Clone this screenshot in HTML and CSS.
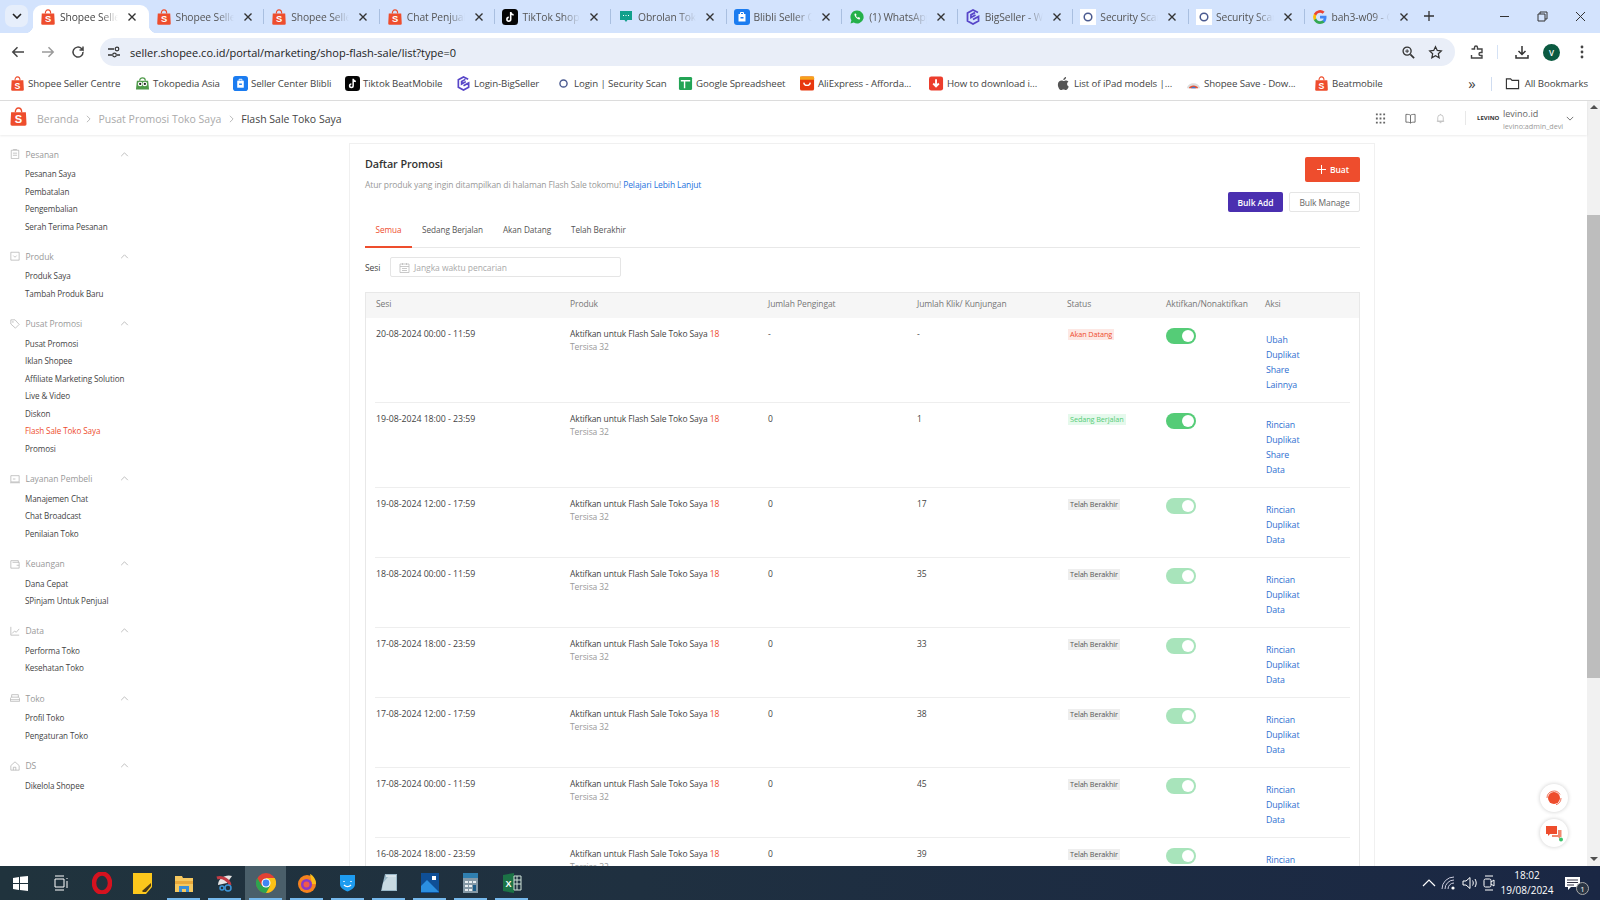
FILE: index.html
```html
<!DOCTYPE html>
<html lang="id">
<head>
<meta charset="utf-8">
<title>Flash Sale Toko Saya</title>
<link rel="stylesheet" href="styles.css">
</head>
<body>
<svg class="defs" width="0" height="0">
  <symbol id="shopee" viewBox="0 0 16 18"><path d="M1 5h14l.6 11.2a1.500 1.500 0 0 1-1.500 1.600H1.900a1.500 1.500 0 0 1-1.500-1.600z" fill="#ee4d2d"/><path d="M5 5c0-2.400 1.200-4 3-4s3 1.600 3 4" fill="none" stroke="#ee4d2d" stroke-width="1.300"/><text x="8" y="15" font-size="10.500" font-family="Liberation Sans" font-weight="700" fill="#fff" text-anchor="middle">S</text></symbol>
  <symbol id="tiktok" viewBox="0 0 16 16"><rect width="16" height="16" rx="3.500" fill="#050505"/><path d="M8.700 3v7.300a1.900 1.900 0 1 1-1.900-1.900M8.700 3.200c.3 1.600 1.300 2.500 2.900 2.700" fill="none" stroke="#fff" stroke-width="1.600"/></symbol>
  <symbol id="blibli" viewBox="0 0 16 16"><rect width="16" height="16" rx="3" fill="#1b7cf0"/><path d="M4.500 5h7v7.500h-7z" fill="#fff"/><path d="M6.500 5V3.500h3V5M6.500 8h3" fill="none" stroke="#fff" stroke-width="1"/><path d="M6.500 8h3v1.500h-3z" fill="#1b7cf0"/></symbol>
  <symbol id="big" viewBox="0 0 16 16"><path d="M13 3.500 8 1 2.500 4v8L8 15l5.500-3V7.500L8 10.500M10.500 6 6 8.500V5.800L10 3.600" fill="none" stroke="#5846c8" stroke-width="1.800"/></symbol>
  <symbol id="ring" viewBox="0 0 16 16"><circle cx="8" cy="8" r="3.800" fill="none" stroke="#4a5a90" stroke-width="1.500"/></symbol>
  <symbol id="chev" viewBox="0 0 10 6"><path d="M1 5l4-4 4 4" fill="none" stroke="#aaa" stroke-width=".9"/></symbol>
  <symbol id="x" viewBox="0 0 10 10"><path d="M1.500 1.500l7 7M8.500 1.500l-7 7" stroke="#333" stroke-width="1.400"/></symbol>
</svg>

<header class="browser">
  <div class="tabstrip">
    <div class="tabsearch"><svg width="10" height="6" viewBox="0 0 10 6"><path d="M1 1l4 4 4-4" fill="none" stroke="#222" stroke-width="1.600"/></svg></div>
    <div class="tabs">
      <div class="tab active"><svg class="fav"><use href="#shopee"/></svg><span class="tablabel">Shopee Seller Centre</span><svg class="tabx"><use href="#x"/></svg></div>
      <div class="tab"><svg class="fav"><use href="#shopee"/></svg><span class="tablabel">Shopee Seller Centre</span><svg class="tabx"><use href="#x"/></svg></div>
      <div class="tab sep"><svg class="fav"><use href="#shopee"/></svg><span class="tablabel">Shopee Seller Centre</span><svg class="tabx"><use href="#x"/></svg></div>
      <div class="tab sep"><svg class="fav"><use href="#shopee"/></svg><span class="tablabel">Chat Penjual Shopee</span><svg class="tabx"><use href="#x"/></svg></div>
      <div class="tab sep"><svg class="fav"><use href="#tiktok"/></svg><span class="tablabel">TikTok Shop</span><svg class="tabx"><use href="#x"/></svg></div>
      <div class="tab sep"><svg class="fav" viewBox="0 0 16 16"><path d="M2 2h12v9H9.500L8 13l-1.500-2H2z" fill="#12a08c"/><path d="M5 6.500h1M7.500 6.500h1M10 6.500h1" stroke="#fff"/></svg><span class="tablabel">Obrolan Toko Anda</span><svg class="tabx"><use href="#x"/></svg></div>
      <div class="tab sep"><svg class="fav"><use href="#blibli"/></svg><span class="tablabel">Blibli Seller Center</span><svg class="tabx"><use href="#x"/></svg></div>
      <div class="tab sep"><svg class="fav" viewBox="0 0 16 16"><path d="M8 1.500a6.500 6.500 0 0 0-5.600 9.800L1.500 14.500l3.300-.9A6.500 6.500 0 1 0 8 1.500z" fill="#25b04a"/><path d="M5.600 4.800c-1 1.700 2.800 6.200 5 5.600l.6-1.400-1.600-.9-.7.700c-.9-.4-1.600-1.200-2-2l.7-.7-.8-1.600z" fill="#fff"/></svg><span class="tablabel">(1) WhatsApp Web</span><svg class="tabx"><use href="#x"/></svg></div>
      <div class="tab sep"><svg class="fav"><use href="#big"/></svg><span class="tablabel">BigSeller - Web</span><svg class="tabx"><use href="#x"/></svg></div>
      <div class="tab sep"><svg class="fav white"><use href="#ring"/></svg><span class="tablabel">Security Scan</span><svg class="tabx"><use href="#x"/></svg></div>
      <div class="tab sep"><svg class="fav white"><use href="#ring"/></svg><span class="tablabel">Security Scan</span><svg class="tabx"><use href="#x"/></svg></div>
      <div class="tab sep"><svg class="fav" viewBox="0 0 16 16"><path d="M14.500 8.200c0-.5 0-1-.1-1.400H8v2.800h3.700a3.200 3.200 0 0 1-1.400 2v1.800h2.200c1.300-1.200 2-3 2-5.200z" fill="#4285f4"/><path d="M8 15c1.900 0 3.400-.6 4.500-1.700l-2.200-1.700c-.6.400-1.400.7-2.300.7-1.800 0-3.300-1.200-3.800-2.800H1.900V11.300A7 7 0 0 0 8 15z" fill="#34a853"/><path d="M4.200 9.500a4 4 0 0 1 0-2.900V4.800H1.900a7 7 0 0 0 0 6.500z" fill="#fbbc05"/><path d="M8 3.800c1 0 1.900.3 2.600 1l2-2A7 7 0 0 0 1.900 4.800l2.300 1.800C4.700 5 6.200 3.800 8 3.800z" fill="#ea4335"/></svg><span class="tablabel">bah3-w09 - Google</span><svg class="tabx"><use href="#x"/></svg></div>
    </div>
    <div class="newtab"><svg width="12" height="12" viewBox="0 0 12 12"><path d="M6 1v10M1 6h10" stroke="#333" stroke-width="1.300"/></svg></div>
    <div class="winctl">
      <svg width="11" height="11" viewBox="0 0 11 11"><path d="M1 5.500h9" stroke="#333"/></svg>
      <svg width="11" height="11" viewBox="0 0 11 11"><path d="M1 3h7v7H1zM3 3V1h7v7H8" fill="none" stroke="#333"/></svg>
      <svg width="11" height="11" viewBox="0 0 11 11"><path d="M1 1l9 9M10 1l-9 9" stroke="#333"/></svg>
    </div>
  </div>
  <div class="toolbar">
    <svg class="tbicon" viewBox="0 0 16 16"><path d="M14 8H3M7.500 3.300 2.800 8l4.700 4.700" fill="none" stroke="#444" stroke-width="1.500"/></svg>
    <svg class="tbicon" viewBox="0 0 16 16"><path d="M2 8h11M8.500 3.300 13.200 8l-4.700 4.700" fill="none" stroke="#9a9a9a" stroke-width="1.500"/></svg>
    <svg class="tbicon" viewBox="0 0 16 16"><path d="M13 8a5 5 0 1 1-1.500-3.500L13 6V2.500M13 6H9.500" fill="none" stroke="#444" stroke-width="1.500"/></svg>
    <div class="omnibox">
      <span class="sitebtn"><svg width="14" height="14" viewBox="0 0 14 14"><path d="M1 4h6M10 10h3M1 10h4" stroke="#333" stroke-width="1.300"/><circle cx="10" cy="4" r="1.800" fill="none" stroke="#333" stroke-width="1.200"/><circle cx="7.500" cy="10" r="1.800" fill="none" stroke="#333" stroke-width="1.200"/></svg></span>
      <span class="url">seller.shopee.co.id/portal/marketing/shop-flash-sale/list?type=0</span>
      <svg class="ombtn" viewBox="0 0 16 16"><circle cx="6.500" cy="6.500" r="4.300" fill="none" stroke="#333" stroke-width="1.400"/><path d="M10 10l4 4" stroke="#333" stroke-width="1.800"/><path d="M4.500 6.500h4M6.500 4.500v4" stroke="#333"/></svg>
      <svg class="ombtn" viewBox="0 0 16 16"><path d="M8 1.800l1.900 4 4.300.5-3.200 3 .9 4.300L8 11.500l-3.900 2.100.9-4.300-3.200-3 4.300-.5z" fill="none" stroke="#333" stroke-width="1.300"/></svg>
    </div>
    <svg class="tbicon ext" viewBox="0 0 16 16"><path d="M2.500 5h3V3.500a1.500 1.500 0 0 1 3 0V5h4.500v3.500h-1.500a1.500 1.500 0 0 0 0 3H13v2.500H2.500v-3" fill="none" stroke="#444" stroke-width="1.400"/></svg>
    <span class="tbsep"></span>
    <svg class="tbicon" viewBox="0 0 16 16"><path d="M8 2v8M4.500 7 8 10.500 11.500 7M2 11v3h12v-3" fill="none" stroke="#333" stroke-width="1.500"/></svg>
    <span class="avatar">V</span>
    <svg class="tbicon kebab" viewBox="0 0 16 16"><circle cx="8" cy="3" r="1.400" fill="#444"/><circle cx="8" cy="8" r="1.400" fill="#444"/><circle cx="8" cy="13" r="1.400" fill="#444"/></svg>
  </div>
  <div class="bookmarks">
    <div class="bmlist">
      <a class="bm"><svg class="fav"><use href="#shopee"/></svg>Shopee Seller Centre</a>
      <a class="bm"><svg class="fav" viewBox="0 0 16 16"><path d="M2 5h12l1 9.500H1z" fill="#4f9a4a"/><circle cx="5.500" cy="8.500" r="2.500" fill="#fff"/><circle cx="10.500" cy="8.500" r="2.500" fill="#fff"/><circle cx="5.500" cy="8.500" r="1.200" fill="#222"/><circle cx="10.500" cy="8.500" r="1.200" fill="#222"/><path d="M5 5c0-4 6-4 6 0" fill="none" stroke="#4f9a4a" stroke-width="1.300"/></svg>Tokopedia Asia</a>
      <a class="bm"><svg class="fav"><use href="#blibli"/></svg>Seller Center Blibli</a>
      <a class="bm"><svg class="fav"><use href="#tiktok"/></svg>Tiktok BeatMobile</a>
      <a class="bm"><svg class="fav"><use href="#big"/></svg>Login-BigSeller</a>
      <a class="bm"><svg class="fav"><use href="#ring"/></svg>Login | Security Scan</a>
      <a class="bm"><svg class="fav" viewBox="0 0 16 16"><rect x="1" y="1" width="14" height="14" rx="1.500" fill="#23a455"/><path d="M3 5h10M7 5v8" stroke="#fff" stroke-width="1.500"/></svg>Google Spreadsheet</a>
      <a class="bm"><svg class="fav" viewBox="0 0 16 16"><rect width="15" height="15" y=".5" rx="2" fill="#e8380e"/><rect width="15" height="3.500" y=".5" fill="#f6a21a"/><path d="M4 7c.5 4 6.500 4 7 0" fill="none" stroke="#fff" stroke-width="1.400"/></svg>AliExpress - Afforda...</a>
      <a class="bm"><svg class="fav" viewBox="0 0 16 16"><rect width="15" height="15" y=".5" rx="2.500" fill="#ec3d2c"/><path d="M7.500 3.500v7M4.500 8l3 3 3-3" fill="none" stroke="#fff" stroke-width="2"/></svg>How to download i...</a>
      <a class="bm"><svg class="fav" viewBox="0 0 16 16"><path d="M11.800 8.500c0-1.600 1.300-2.300 1.400-2.400-.8-1.100-2-1.300-2.400-1.300-1-.1-2 .6-2.500.6s-1.300-.6-2.200-.6C4 4.800 2 6.300 2 9.200 2 11.900 4 15 5.600 15c.8 0 1.300-.6 2.400-.6s1.500.6 2.400.6c1.500 0 2.900-2.600 3.200-3.800-1-.4-1.800-1.400-1.800-2.700zM10 3.300c.5-.6.800-1.400.7-2.300-.7 0-1.600.5-2.100 1.100-.5.500-.9 1.400-.8 2.200.8.100 1.600-.4 2.200-1z" fill="#555"/></svg>List of iPad models |...</a>
      <a class="bm"><svg class="fav" viewBox="0 0 16 16"><path d="M1 13c1-7 13-7 14 0z" fill="#ddd"/><path d="M3 13c1-4 9-4 10 0z" fill="#e8502e"/><path d="M5.500 13c.5-2 4.500-2 5 0z" fill="#3a7bd5"/></svg>Shopee Save - Dow...</a>
      <a class="bm"><svg class="fav"><use href="#shopee"/></svg>Beatmobile</a>
    </div>
    <span class="bmmore">»</span>
    <span class="bmsep"></span>
    <a class="bm allbm"><svg class="fav" viewBox="0 0 16 16"><path d="M1.500 3h4.500l1.500 1.700h7v8.800h-13z" fill="none" stroke="#333" stroke-width="1.200"/></svg>All Bookmarks</a>
  </div>
</header>

<div class="app">
  <div class="page">
    <div class="apphead">
      <svg class="logo"><use href="#shopee"/></svg>
      <nav class="crumbs">
        <a>Beranda</a><svg class="crumbsep" viewBox="0 0 6 10"><path d="M1 1l4 4-4 4" fill="none" stroke="#aaa"/></svg>
        <a>Pusat Promosi Toko Saya</a><svg class="crumbsep" viewBox="0 0 6 10"><path d="M1 1l4 4-4 4" fill="none" stroke="#aaa"/></svg>
        <span>Flash Sale Toko Saya</span>
      </nav>
      <div class="headright">
        <svg class="hicon" viewBox="0 0 12 12"><path d="M1 1.500h2M5 1.500h2M9 1.500h2M1 6h2M5 6h2M9 6h2M1 10.500h2M5 10.500h2M9 10.500h2" stroke="#666" stroke-width="2"/></svg>
        <svg class="hicon" viewBox="0 0 12 12"><path d="M6 2.500C5 1.500 3 1.500 1 1.500v8.500c2 0 4 0 5 1 1-1 3-1 5-1V1.500c-2 0-4 0-5 1zM6 2.500V11" fill="none" stroke="#666"/></svg>
        <svg class="hicon" viewBox="0 0 12 12"><path d="M3 9V5a3 3 0 0 1 6 0v4zM2 9h8M6 1v1M5 10.500h2" fill="none" stroke="#bbb" stroke-width=".9"/></svg>
        <span class="hsep"></span>
        <span class="brand">LEVINO</span>
        <div class="account"><span class="accname">levino.id</span><span class="accsub">levino:admin_devi</span></div>
        <svg class="acchev" viewBox="0 0 10 6"><path d="M1 1l4 4 4-4" fill="none" stroke="#555"/></svg>
      </div>
    </div>
    <div class="layout">
      <aside class="sidebar">
        <section class="group"><h3><svg class="gicon" viewBox="0 0 12 12"><path d="M1.500 1.500h9v10h-9zM4 1V.5h4V1M3.500 5h5M3.500 7.500h5" fill="none" stroke="#aaa" stroke-width=".8"/></svg>Pesanan<svg class="gchev"><use href="#chev"/></svg></h3>
          <a>Pesanan Saya</a><a>Pembatalan</a><a>Pengembalian</a><a>Serah Terima Pesanan</a></section>
        <section class="group"><h3><svg class="gicon" viewBox="0 0 12 12"><path d="M1 1.500h10v9.500H1zM4 5.500l2 2 2-2" fill="none" stroke="#aaa" stroke-width=".8"/></svg>Produk<svg class="gchev"><use href="#chev"/></svg></h3>
          <a>Produk Saya</a><a>Tambah Produk Baru</a></section>
        <section class="group"><h3><svg class="gicon" viewBox="0 0 12 12"><path d="M1 1h5l5 5.500-4.500 4.500L1 6z" fill="none" stroke="#aaa" stroke-width=".8"/><circle cx="3.500" cy="3.500" r=".8" fill="#aaa"/></svg>Pusat Promosi<svg class="gchev"><use href="#chev"/></svg></h3>
          <a>Pusat Promosi</a><a>Iklan Shopee</a><a>Affiliate Marketing Solution</a><a>Live &amp; Video</a><a>Diskon</a><a class="current">Flash Sale Toko Saya</a><a>Promosi</a></section>
        <section class="group"><h3><svg class="gicon" viewBox="0 0 12 12"><path d="M1 2h10v7.500H1zM3.500 6h3M0 10.500h12" fill="none" stroke="#aaa" stroke-width=".8"/></svg>Layanan Pembeli<svg class="gchev"><use href="#chev"/></svg></h3>
          <a>Manajemen Chat</a><a>Chat Broadcast</a><a>Penilaian Toko</a></section>
        <section class="group"><h3><svg class="gicon" viewBox="0 0 12 12"><path d="M1 2h9v2M1 2v9h10V4H3M8 7.500h3" fill="none" stroke="#aaa" stroke-width=".8"/></svg>Keuangan<svg class="gchev"><use href="#chev"/></svg></h3>
          <a>Dana Cepat</a><a>SPinjam Untuk Penjual</a></section>
        <section class="group"><h3><svg class="gicon" viewBox="0 0 12 12"><path d="M1 1v10h10M2.500 9l3-3 2 1.500 3.500-4" fill="none" stroke="#aaa" stroke-width=".8"/></svg>Data<svg class="gchev"><use href="#chev"/></svg></h3>
          <a>Performa Toko</a><a>Kesehatan Toko</a></section>
        <section class="group"><h3><svg class="gicon" viewBox="0 0 12 12"><path d="M2 5V2h8v3M.5 7c0-1.500 1-2 1.500-2h8c.5 0 1.500.5 1.500 2v3h-11zM.5 8h11" fill="none" stroke="#aaa" stroke-width=".8"/></svg>Toko<svg class="gchev"><use href="#chev"/></svg></h3>
          <a>Profil Toko</a><a>Pengaturan Toko</a></section>
        <section class="group"><h3><svg class="gicon" viewBox="0 0 12 12"><path d="M1 5.500 6 1l5 4.500V11H1zM4 11V7.500h3V11" fill="none" stroke="#aaa" stroke-width=".8"/></svg>DS<svg class="gchev"><use href="#chev"/></svg></h3>
          <a>Dikelola Shopee</a></section>
      </aside>
      <main class="card">
        <div class="cardhead">
          <div class="cardintro">
            <h1>Daftar Promosi</h1>
            <p>Atur produk yang ingin ditampilkan di halaman Flash Sale tokomu! <a>Pelajari Lebih Lanjut</a></p>
          </div>
          <div class="cardactions">
            <button class="btn primary"><svg width="11" height="11" viewBox="0 0 11 11"><path d="M5.500 1v9M1 5.500h9" stroke="#fff"/></svg>Buat</button>
            <div class="bulk"><button class="btn purple">Bulk Add</button><button class="btn plain">Bulk Manage</button></div>
          </div>
        </div>
        <div class="ptabs"><a class="on">Semua</a><a>Sedang Berjalan</a><a>Akan Datang</a><a>Telah Berakhir</a></div>
        <div class="filter"><label>Sesi</label><div class="dateinput"><svg width="11" height="11" viewBox="0 0 11 11"><path d="M1 2h9v8.500H1zM1 4.500h9M3.500 1v2M7.500 1v2M3 6.500h5M3 8.500h5" fill="none" stroke="#bbb" stroke-width=".8"/></svg>Jangka waktu pencarian</div></div>
        <div class="table">
          <div class="thead"><span>Sesi</span><span>Produk</span><span>Jumlah Pengingat</span><span>Jumlah Klik/ Kunjungan</span><span>Status</span><span>Aktifkan/Nonaktifkan</span><span>Aksi</span></div>

          <div class="row tall"><span class="when">20-08-2024 00:00 - 11:59</span><div><div>Aktifkan untuk Flash Sale Toko Saya <em>18</em></div><div class="left">Tersisa 32</div></div><span>-</span><span>-</span><div><span class="tag up">Akan Datang</span></div><span class="toggle"></span><div class="acts"><a>Ubah</a><a>Duplikat</a><a>Share</a><a>Lainnya</a></div></div>
          <div class="row tall"><span class="when">19-08-2024 18:00 - 23:59</span><div><div>Aktifkan untuk Flash Sale Toko Saya <em>18</em></div><div class="left">Tersisa 32</div></div><span>0</span><span>1</span><div><span class="tag live">Sedang Berjalan</span></div><span class="toggle"></span><div class="acts"><a>Rincian</a><a>Duplikat</a><a>Share</a><a>Data</a></div></div>
          <div class="row"><span class="when">19-08-2024 12:00 - 17:59</span><div><div>Aktifkan untuk Flash Sale Toko Saya <em>18</em></div><div class="left">Tersisa 32</div></div><span>0</span><span>17</span><div><span class="tag end">Telah Berakhir</span></div><span class="toggle off"></span><div class="acts"><a>Rincian</a><a>Duplikat</a><a>Data</a></div></div>
          <div class="row"><span class="when">18-08-2024 00:00 - 11:59</span><div><div>Aktifkan untuk Flash Sale Toko Saya <em>18</em></div><div class="left">Tersisa 32</div></div><span>0</span><span>35</span><div><span class="tag end">Telah Berakhir</span></div><span class="toggle off"></span><div class="acts"><a>Rincian</a><a>Duplikat</a><a>Data</a></div></div>
          <div class="row"><span class="when">17-08-2024 18:00 - 23:59</span><div><div>Aktifkan untuk Flash Sale Toko Saya <em>18</em></div><div class="left">Tersisa 32</div></div><span>0</span><span>33</span><div><span class="tag end">Telah Berakhir</span></div><span class="toggle off"></span><div class="acts"><a>Rincian</a><a>Duplikat</a><a>Data</a></div></div>
          <div class="row"><span class="when">17-08-2024 12:00 - 17:59</span><div><div>Aktifkan untuk Flash Sale Toko Saya <em>18</em></div><div class="left">Tersisa 32</div></div><span>0</span><span>38</span><div><span class="tag end">Telah Berakhir</span></div><span class="toggle off"></span><div class="acts"><a>Rincian</a><a>Duplikat</a><a>Data</a></div></div>
          <div class="row"><span class="when">17-08-2024 00:00 - 11:59</span><div><div>Aktifkan untuk Flash Sale Toko Saya <em>18</em></div><div class="left">Tersisa 32</div></div><span>0</span><span>45</span><div><span class="tag end">Telah Berakhir</span></div><span class="toggle off"></span><div class="acts"><a>Rincian</a><a>Duplikat</a><a>Data</a></div></div>
          <div class="row"><span class="when">16-08-2024 18:00 - 23:59</span><div><div>Aktifkan untuk Flash Sale Toko Saya <em>18</em></div><div class="left">Tersisa 32</div></div><span>0</span><span>39</span><div><span class="tag end">Telah Berakhir</span></div><span class="toggle off"></span><div class="acts"><a>Rincian</a><a>Duplikat</a><a>Data</a></div></div>
        </div>
      </main>
    </div>
  </div>
  <div class="scrollbar"><span class="sup"></span><span class="thumb"></span><span class="sdown"></span></div>
  <button class="float one"><svg width="18" height="18" viewBox="0 0 18 18"><circle cx="9" cy="9" r="6" fill="#ee4d2d"/><path d="M2 9a7 7 0 0 1 13-3.500M16 9a7 7 0 0 1-5 6.700" fill="none" stroke="#ee4d2d" stroke-width=".8"/></svg></button>
  <button class="float two"><svg width="18" height="18" viewBox="0 0 18 18"><path d="M1 2h11v8H5l-2 2v-2H1z" fill="#ee4d2d"/><path d="M13 6h3.500v7H15v2l-2-2H7v-2h6z" fill="#f08a70"/><circle cx="16" cy="15.500" r="2" fill="#3cc26b"/></svg></button>
</div>

<footer class="taskbar">
  <div class="apps">
    <span class="tb"><svg width="17" height="17" viewBox="0 0 17 17"><path d="M1 3l6-1v6H1zM8 1.800 16 1v7H8zM1 9h6v6l-6-1zM8 9h8v7l-8-1z" fill="#fff"/></svg></span>
    <span class="tb"><svg width="16" height="16" viewBox="0 0 16 16"><path d="M2 1h9M2 15h9M2 4h9v8H2zM14 3v1M14 6v7" fill="none" stroke="#fff"/></svg></span>
    <span class="tb"><svg width="20" height="22" viewBox="0 0 20 22"><ellipse cx="10" cy="11" rx="8" ry="9.500" fill="none" stroke="#d5121f" stroke-width="4.500"/></svg></span>
    <span class="tb"><svg width="19" height="21" viewBox="0 0 19 21"><path d="M0 0h19v14l-6 7H0z" fill="#fcc71c"/><path d="M18 10v3l-5 6h-3l-1-1z" fill="#4a3a18"/></svg></span>
    <span class="tb run"><svg width="18" height="17" viewBox="0 0 18 17"><path d="M0 1h7l1 2h10v14H0z" fill="#f6c85f"/><path d="M0 6h18v3H0z" fill="#e9a93b"/><path d="M4 11h10v6h-3v-3H7v3H4z" fill="#3b8fd8"/></svg></span>
    <span class="tb run"><svg width="20" height="20" viewBox="0 0 20 20"><path d="M3 12c0-7 8-11 14-9l-5 7z" fill="#e8e6e6"/><path d="M2 5c5-2 12 2 13 7" fill="none" stroke="#c23b45" stroke-width="3"/><circle cx="13" cy="15" r="3" fill="none" stroke="#3e95d6" stroke-width="1.500"/><circle cx="7" cy="15" r="2" fill="none" stroke="#3e95d6" stroke-width="1.500"/></svg></span>
    <span class="tb run active"><svg width="20" height="20" viewBox="0 0 20 20"><circle cx="10" cy="10" r="10" fill="#e34133"/><path d="M10 20a10 10 0 0 0 8.700-15H10z" fill="#fbc116"/><path d="M1.300 5A10 10 0 0 0 10 20l4-7H6z" fill="#2ea44f"/><circle cx="10" cy="10" r="4.500" fill="#fff"/><circle cx="10" cy="10" r="3.400" fill="#4285f4"/></svg></span>
    <span class="tb run"><svg width="20" height="20" viewBox="0 0 20 20"><circle cx="10" cy="11" r="9" fill="#f5821f"/><path d="M13 1c4 2 6 6 6 10h-4z" fill="#fbbc1a"/><circle cx="9.500" cy="11.500" r="5.500" fill="#8a3ac8"/><circle cx="9.500" cy="11.500" r="3" fill="#f05a4a"/></svg></span>
    <span class="tb run"><svg width="17" height="18" viewBox="0 0 17 18"><path d="M1 1h15v9c0 4-4 6-7.500 7.500C5 16 1 14 1 10z" fill="#1e9cf0"/><path d="M5 7v1M12 7v1M5 11c2 2 5 2 7 0" fill="none" stroke="#fff" stroke-width="1.400"/></svg></span>
    <span class="tb run"><svg width="20" height="20" viewBox="0 0 20 20"><path d="M6 1h12v17H2z" fill="#9ab8c8"/><path d="M7 2h10v2H7z" fill="#d7e4ea"/><path d="M4 10 9 4h8v13H3z" fill="#c8dae2"/></svg></span>
    <span class="tb run"><svg width="18" height="20" viewBox="0 0 18 20"><rect width="18" height="20" fill="#0f4f96"/><path d="M0 13l6-6 12 12H0z" fill="#2b8fe0"/><rect x="11" y="3" width="4" height="4" fill="#fff"/></svg></span>
    <span class="tb run"><svg width="15" height="20" viewBox="0 0 15 20"><rect width="15" height="20" fill="#8498a6"/><rect x="0" y="0" width="15" height="5" fill="#2f7fb0"/><path d="M2 8h3v2H2zM6 8h3v2H6zM10 8h3v2h-3zM2 12h3v2H2zM6 12h3v2H6zM2 16h3v2H2zM6 16h3v2H6z" fill="#e8eef2"/><rect x="10" y="12" width="3" height="6" fill="#1d5c88"/></svg></span>
    <span class="tb run"><svg width="20" height="20" viewBox="0 0 20 20"><path d="M1 2l11-2v20L1 18z" fill="#1c7346"/><path d="M12 3h7v14h-7zM15 3v14M12 7h7M12 11h7" fill="none" stroke="#cfe3d8"/><text x="3.500" y="13.500" font-size="9" font-weight="700" font-family="Liberation Sans" fill="#fff">X</text></svg></span>
  </div>
  <div class="tray">
    <svg width="14" height="8" viewBox="0 0 14 8"><path d="M1 7l6-6 6 6" fill="none" stroke="#fff" stroke-width="1.200"/></svg>
    <svg width="16" height="14" viewBox="0 0 16 14"><path d="M1 13A12 12 0 0 1 13 1M4 13a9 9 0 0 1 9-9M7 13a6 6 0 0 1 6-6" fill="none" stroke="#ccd" stroke-width="1"/><circle cx="12" cy="12" r="1.600" fill="#fff"/></svg>
    <svg width="16" height="14" viewBox="0 0 16 14"><path d="M1 5h3l4-3.500v11L4 9H1zM10.500 4.500c1 1.500 1 3.500 0 5M13 3c1.600 2.500 1.600 5.500 0 8" fill="none" stroke="#fff"/></svg>
    <svg width="12" height="16" viewBox="0 0 12 16"><path d="M2 1h8M2 15h8" stroke="#fff"/><rect x="1" y="4" width="7" height="8" rx="1.500" fill="none" stroke="#fff"/><path d="M8 7l3-2v6L8 9" fill="none" stroke="#fff"/></svg>
    <div class="clock"><span>18:02</span><span>19/08/2024</span></div>
    <div class="notif"><svg width="15" height="14" viewBox="0 0 15 14"><path d="M0 0h15v10H6l-3 3v-3H0z" fill="#fff"/><path d="M2 3h11M2 5.500h11M2 8h7" stroke="#334"/></svg><span class="badge">1</span></div>
  </div>
</footer>
</body>
</html>
```
FILE: styles.css
```css
* { box-sizing: border-box; }
html, body { margin: 0; height: 100%; }
body {
  width: 1600px; height: 900px; overflow: hidden;
  display: flex; flex-direction: column;
  font-family: "Open Sans", "Noto Sans", sans-serif;
  background: #fff; color: #333;
}
.defs { position: absolute; }
a { color: inherit; text-decoration: none; }
h1, h3, p { margin: 0; font-weight: 400; }
button { font-family: inherit; }

/* browser chrome */
.browser { flex: none; height: 101px; border-bottom: 1px solid #dcdcdc; }
.tabstrip { height: 33px; background: #d3e3fd; display: flex; align-items: flex-end; position: relative; }
.tabsearch { position: absolute; left: 5px; top: 5px; width: 23px; height: 22px; border-radius: 7px; background: #e6eefb; display: flex; align-items: center; justify-content: center; }
.tabs { margin-left: 33px; display: grid; grid-template-columns: repeat(12, 115.6px); height: 28px; }
.tab { display: flex; align-items: center; padding: 0 0 4px 7px; font-size: 10.300px; letter-spacing: -.1px; color: #555; position: relative; }
.tab.active { background: #fff; border-radius: 9px 9px 0 0; color: #444; }
.tab.active::before, .tab.active::after { content: ""; position: absolute; bottom: 0; width: 8px; height: 8px; }
.tab.active::before { left: -8px; background: radial-gradient(circle at 0 0, transparent 8px, #fff 8.500px); }
.tab.active::after { right: -8px; background: radial-gradient(circle at 100% 0, transparent 8px, #fff 8.500px); }
.tab.sep::before { content: ""; position: absolute; left: -1px; top: 4px; height: 15px; width: 1px; background: #a9bfe0; }
.fav { width: 16px; height: 16px; flex: none; }
.fav.white { background: #fff; }
.tablabel { width: 58px; margin-left: 4px; white-space: nowrap; overflow: hidden; mask-image: linear-gradient(90deg, #000 70%, transparent); }
.tabx { width: 10px; height: 10px; margin-left: 9px; flex: none; }
.newtab { margin-left: 3px; height: 24px; width: 18px; display: flex; align-items: center; align-self: flex-start; margin-top: 4px; }
.winctl { margin-left: auto; display: flex; gap: 27px; height: 24px; align-self: flex-start; margin-top: 4px; align-items: center; padding-right: 14px; }

.toolbar { height: 34px; padding: 4px 8px 0 10px; background: #fff; display: flex; align-items: center; }
.tbicon { width: 16px; height: 16px; flex: none; margin-right: 14px; }
.omnibox { width: 1355px; height: 28px; border-radius: 14px; background: #e9eef8; display: flex; align-items: center; padding-right: 12px; }
.sitebtn { width: 28px; height: 28px; display: flex; align-items: center; justify-content: center; flex: none; margin-right: 2px; }
.url { font-size: 11px; color: #222; flex: 1; }
.ombtn { width: 15px; height: 15px; margin-left: 12px; flex: none; }
.ext { margin: 0 0 0 14px; }
.tbsep { width: 1px; height: 14px; background: #d5e2f5; margin: 0 16px 0 12px; }
.avatar { width: 17px; height: 17px; border-radius: 50%; background: #0b5a41; color: #fff; font-size: 8px; font-weight: 600; display: flex; align-items: center; justify-content: center; flex: none; margin-right: 14px; margin-left: -1px; }
.kebab { margin-right: 0; }

.bookmarks { height: 33px; padding: 0 12px 0 0; background: #fff; display: flex; align-items: center; }
.bmlist { display: grid; grid-template-columns: 125px 98px 112px 111px 100px 122px 122px 129px 127px 130px 128px 100px; padding-left: 10px; }
.bm { display: flex; align-items: center; gap: 3px; font-size: 9.700px; letter-spacing: -.1px; color: #444; white-space: nowrap; }
.bm .fav { width: 15px; height: 15px; }
.bmmore { margin-left: auto; font-size: 15px; color: #444; line-height: 1; }
.bmsep { width: 1px; height: 14px; background: #cfdcf0; margin: 0 13px 0 15px; }
.allbm { gap: 5px; }

/* app */
.app { flex: 1; min-height: 0; position: relative; display: flex; overflow: hidden; }
.page { flex: 1; min-width: 0; display: flex; flex-direction: column; }
.apphead { flex: none; height: 34px; display: flex; align-items: center; padding-left: 10px; box-shadow: 0 1px 2px rgba(0,0,0,.08); position: relative; background: #fff; }
.logo { width: 17px; height: 19px; margin-top: -4px; }
.crumbs { margin: 2px 0 0 10px; display: flex; align-items: center; font-size: 10.500px; color: #aaa; }
.crumbs span { color: #444; }
.crumbsep { width: 5px; height: 8px; margin: 0 7.500px; }
.headright { margin-left: auto; display: flex; align-items: center; padding-right: 13px; }
.hicon { width: 11px; height: 11px; margin-right: 19px; }
.hsep { width: 1px; height: 14px; background: #e8e8e8; margin: 0 11px 0 0; }
.brand { font-size: 6px; font-weight: 700; color: #333; width: 24px; }
.account { margin: 3px 0 0 2px; width: 63px; display: flex; flex-direction: column; line-height: 12px; }
.accname { font-size: 9px; color: #666; }
.accsub { font-size: 7.200px; color: #999; }
.acchev { width: 8px; height: 5px; }

.layout { flex: 1; min-height: 0; display: flex; overflow: hidden; }
.sidebar { width: 349px; flex: none; padding-top: 12px; padding-left: 10px; }
.group { margin-bottom: 14.400px; }
.group h3 { display: flex; align-items: center; width: 119px; height: 14px; font-size: 8.500px; letter-spacing: -.05px; color: #999; margin-bottom: 4px; }
.gicon { width: 10px; height: 10px; margin-right: 5.500px; flex: none; }
.gchev { width: 9px; height: 5px; margin-left: auto; }
.group a { display: block; margin-left: 15px; height: 17.500px; line-height: 17.500px; font-size: 8.100px; letter-spacing: -.1px; color: #444; }
.group a.current { color: #ee4d2d; }

.card { width: 1026px; flex: none; margin-top: 8px; padding: 0 14px 0 15px; border: 1px solid #f0f0f0; border-bottom: 0; }
.cardhead { display: flex; justify-content: space-between; height: 82px; padding-top: 13px; }
.cardintro h1 { font-size: 10.800px; letter-spacing: -.1px; font-weight: 600; color: #333; line-height: 16px; margin-top: -1px; }
.cardintro p { font-size: 8.500px; letter-spacing: -.1px; color: #999; margin-top: 7px; line-height: 12px; }
.cardintro p a { color: #2673dd; }
.cardactions { display: flex; flex-direction: column; align-items: flex-end; gap: 10px; }
.btn { border-radius: 2px; font-size: 8.500px; letter-spacing: -.1px; cursor: pointer; }
.primary { height: 25px; width: 55px; background: #ee4d2d; color: #fff; border: 0; display: flex; align-items: center; justify-content: center; gap: 3px; font-weight: 600; }
.bulk { display: flex; gap: 6px; }
.purple { height: 20px; width: 55px; background: #4a2fb0; color: #fff; border: 0; padding: 0; font-weight: 600; }
.plain { height: 20px; width: 71px; background: #fff; color: #666; border: 1px solid #e5e5e5; padding: 0; }
.ptabs { display: flex; box-sizing: content-box; height: 21px; border-bottom: 1px solid #e8e8e8; font-size: 8.200px; letter-spacing: -.05px; color: #555; }
.ptabs a { padding: 0 10px; height: 21px; line-height: 8px; }
.ptabs a.on { color: #ee4d2d; border-bottom: 2px solid #ee4d2d; height: 22px; padding: 0 10.500px; }
.filter { display: flex; align-items: center; height: 20px; margin-top: 9px; font-size: 8.500px; letter-spacing: -.05px; color: #444; }
.filter label { width: 25px; }
.dateinput { width: 231px; height: 20px; border: 1px solid #e5e5e5; border-radius: 2px; display: flex; align-items: center; gap: 4px; padding-left: 8px; color: #aaa; }
.table { margin-top: 15px; width: 995px; border: 1px solid #e8e8e8; border-bottom: 0; border-top: 0; }
.thead, .row { display: grid; grid-template-columns: 194px 198px 149px 150px 99px 99px 1fr; font-size: 8.500px; letter-spacing: -.1px; }
.thead { padding: 5px 9px 0 10px; height: 26px; background: #f6f6f6; color: #777; line-height: 12px; border-top: 1px solid #e8e8e8; }
.row { margin: 0 9px; padding-left: 1px; height: 70px; padding-top: 9px; line-height: 13px; color: #444; border-bottom: 1px solid #eee; }
.row.tall { height: 85px; }
.when { font-size: 8.800px; letter-spacing: -.05px; margin-top: .5px; }
.row em { font-style: normal; color: #ee4d2d; }
.left { color: #999; }
.tag { display: inline-block; margin: 1.500px 0 0 1px; padding: 0 2px; font-size: 7.300px; line-height: 11px; vertical-align: top; }
.up { background: #fde8e4; color: #ee4d2d; }
.live { background: #e5f9ec; color: #55cc77; }
.end { background: #eee; color: #555; }
.toggle { width: 30px; height: 16px; border-radius: 8px; background: #55cc77; position: relative; margin-top: 1px; }
.toggle::after { content: ""; position: absolute; right: 2px; top: 2px; width: 12px; height: 12px; border-radius: 50%; background: #fff; }
.toggle.off { background: #a8e4bb; }
.acts { margin-top: 5.500px; padding-left: 1px; font-size: 8.800px; letter-spacing: -.1px; }
.acts a { display: block; color: #2f6fd0; line-height: 15px; }

/* scrollbar */
.scrollbar { width: 13px; flex: none; background: #f1f1f1; display: flex; flex-direction: column; align-items: stretch; }
.sup { width: 0; height: 0; margin: 4px auto 0; border: 4px solid transparent; border-top: 0; border-bottom-color: #505050; }
.thumb { height: 463px; margin-top: 106px; background: #bdbdbd; }
.sdown { width: 0; height: 0; margin: auto auto 5px; border: 4px solid transparent; border-bottom: 0; border-top-color: #505050; }

.float { position: absolute; right: 32px; width: 28px; height: 28px; border: 0; border-radius: 50%; background: #fff; box-shadow: 0 0 4px rgba(0,0,0,.2); padding: 0; display: flex; align-items: center; justify-content: center; }
.float.one { top: 683px; }
.float.two { top: 718px; }

/* taskbar */
.taskbar { flex: none; height: 34px; background: linear-gradient(90deg, #20333d, #1f3040 40%, #1a2744); display: flex; align-items: stretch; color: #fff; }
.apps { display: flex; }
.tb { width: 41px; display: flex; align-items: center; justify-content: center; position: relative; }
.tb:first-child { width: 40px; }
.tb.active { background: #4a5f6a; }
.tb.run::after { content: ""; position: absolute; left: 4px; right: 4px; bottom: 0; height: 2px; background: #76b9ed; }
.tray { margin-left: auto; display: flex; align-items: center; padding-right: 11px; }
.tray > svg { margin-right: 5px; }
.clock { width: 60px; margin-left: -3px; margin-right: 8px; display: flex; flex-direction: column; align-items: center; font-size: 10px; line-height: 15px; }
.notif { width: 24px; height: 24px; position: relative; padding-top: 3px; }
.badge { position: absolute; right: 0; bottom: 0; width: 13px; height: 13px; border-radius: 50%; border: 1px solid #aaa; background: #2a3544; font-size: 8px; line-height: 11px; text-align: center; }
```
